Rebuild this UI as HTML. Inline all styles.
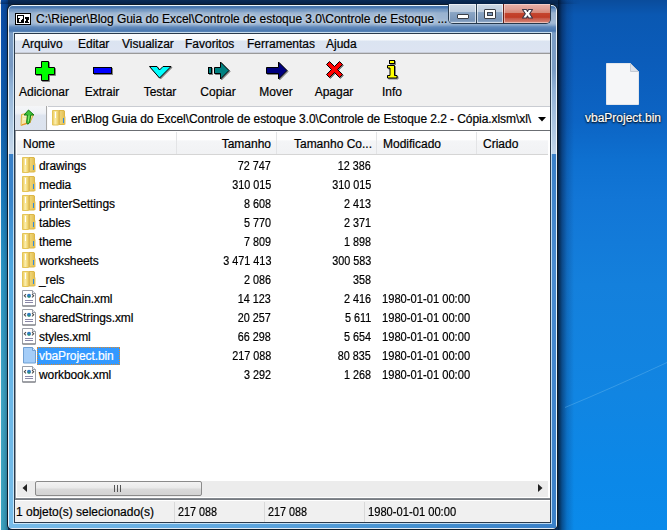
<!DOCTYPE html>
<html><head><meta charset="utf-8">
<style>
*{margin:0;padding:0;box-sizing:border-box}
html,body{width:667px;height:530px;overflow:hidden}
body{position:relative;font-family:"Liberation Sans",sans-serif;font-size:12px;color:#000;background:#0a2c58;-webkit-text-stroke:0.2px currentColor}
.a{position:absolute;white-space:nowrap}
#dl{left:0;top:0;width:8px;height:530px;background:linear-gradient(180deg,#0a4ea8 0px,#0c54b0 40px,#1062b2 115px,#1a7ac0 185px,#2a98c8 265px,#40a8c8 395px,#3ca6c2 530px)}
#dr{left:558px;top:0;width:110px;height:530px;background:linear-gradient(180deg,#0a4c9c 0px,#0a58b2 15px,#0b5cba 60px,#0c64c4 120px,#0e70d0 160px,#1276d6 200px,#1480dc 285px,#1185e2 395px,#0b88e8 480px,#0a8aea 530px)}
#shadow{left:558px;top:0;width:16px;height:530px;background:linear-gradient(90deg,rgba(2,15,35,.85) 0px,rgba(5,30,70,.55) 4px,rgba(8,45,100,.25) 9px,rgba(8,50,110,0) 16px)}
#win{left:7px;top:4px;width:551px;height:526px;border:1px solid #0e1b28;border-radius:6px 6px 5px 5px;overflow:hidden}
#fr{left:0;top:0;width:549px;height:524px;border:1px solid rgba(255,255,255,.85);border-radius:5px 5px 4px 4px;background:linear-gradient(180deg,#4474ae 0px,#4a78b0 2px,#6f94c0 3px,#7a9cc4 5px,#98b2d0 7px,#a2b9d4 17px,#8aa8cc 19px,#5f88ba 21px,#4a78b0 25px,#7a9cc4 27px,#7899c2 60px,#90b2d6 80px,#b4cce4 125px,#c8d8ea 147px,#c8d8ea 148px,#3a80c8 148px,#3a86cc 195px,#50a8e0 260px,#6cb8e8 390px,#78bce8 524px)}
#frr{left:543px;top:28px;width:5px;height:495px;background:linear-gradient(180deg,#7a9cc4 0px,#7a9cc4 37px,#92b2d6 57px,#c0d4e8 120px,#c0d4e8 121px,#3a80c8 121px,#4a8cd0 232px,#3f84cc 400px,#3a80c8 496px)}
#frb{left:1px;top:517px;width:547px;height:6px;background:linear-gradient(90deg,#78bce8 0%,#60a8e0 40%,#4490d0 75%,#3a80c8 100%)}
#client{left:14px;top:33px;width:537px;height:490px;border:1px solid #2a3a4c;background:#f0f0f0;box-shadow:0 0 0 1px rgba(230,245,255,.75)}
#menu{left:15px;top:34px;width:535px;height:20px;background:linear-gradient(180deg,#fbfcfe 0px,#f6f9fc 6px,#dbe4f1 7px,#dde4f2 18px,#c8cdd8 18px,#c8cdd8 19px);border-bottom:1px solid #9a9a9a}
#menu span{position:absolute;top:3px}
#tb{left:15px;top:54px;width:535px;height:52px;background:#f0f0f0}
.lbl{position:absolute;top:31px;width:58px;text-align:center}
#up{left:15px;top:106px;width:31px;height:24px;background:linear-gradient(180deg,#f5f6f8 0%,#eef1f6 30%,#dde4ef 40%,#dce3ee 100%)}
#upsep{left:46px;top:106px;width:2px;height:24px;background:linear-gradient(90deg,#a9a9a9 50%,#fafafa 50%)}
#combo{left:48px;top:106px;width:502px;height:24px;background:#fff;border-top:1px solid #c9ccd2}
#addrline{left:15px;top:130px;width:535px;height:1px;background:#6b6e73}
#list{left:15px;top:131px;width:535px;height:367px;background:#fff;border-left:1px solid #9aa0a6}
#hdr{left:17px;top:131px;width:531px;height:24px;background:linear-gradient(180deg,#fff 0%,#fff 40%,#f4f5f7 42%,#f1f2f4 100%);border-bottom:1px solid #d5d5d5}
.sep{position:absolute;top:1px;width:1px;height:22px;background:#e3e4e6}
.row{position:absolute;left:0;height:19px;width:533px}
.row .n{position:absolute;left:22px;top:3px;letter-spacing:-0.1px}
.row .s1{position:absolute;right:279px;top:3px;transform:scaleX(.9);transform-origin:100% 50%}
.row .s2{position:absolute;right:179px;top:3px;transform:scaleX(.9);transform-origin:100% 50%}
.row .d{position:absolute;left:365px;top:3px;transform:scaleX(.93);transform-origin:0 50%}
.ic{position:absolute;left:5px;top:1px}
.sel{background:#3399ff;color:#fff;outline:1px dotted #d88a30;outline-offset:-1px;padding:2px 6px 2px 2px;margin:-2px 0 0 -2px}
#sb{left:17px;top:481px;width:531px;height:16px;background:#ececec}
#thumb{left:35px;top:481px;width:167px;height:15px;border:1px solid #8b8b8b;border-radius:2px;background:linear-gradient(180deg,#f3f3f3 0%,#eaeaea 45%,#dadada 55%,#d3d3d3 100%)}
#sline{left:15px;top:498px;width:535px;height:2px;background:linear-gradient(180deg,#8a8f95,#6f747a)}
#status{left:15px;top:500px;width:535px;height:22px;border-top:1px solid #fff;background:#f0f0f0}
.ssep{position:absolute;top:1px;width:1px;height:20px;background:#d9d9d9}
</style></head><body>
<div class="a" id="dl"></div>
<div class="a" style="left:0;top:0;width:1px;height:530px;background:#f4f6f8"></div>
<div class="a" id="dr"></div>
<div class="a" id="shadow"></div>
<div class="a" style="left:0;top:0;width:580px;height:4px;background:linear-gradient(180deg,rgba(0,20,50,0) 0%,rgba(0,20,50,.45) 100%);-webkit-mask-image:linear-gradient(90deg,#000 95%,transparent 100%)"></div>
<div class="a" style="left:1px;top:0;width:7px;height:530px;background:linear-gradient(90deg,rgba(0,20,50,0) 0%,rgba(0,20,50,.15) 60%,rgba(0,20,50,.4) 100%)"></div>
<svg class="a" style="left:557px;top:350px" width="110" height="70"><path d="M8 57.5Q55 38 110 12.5" stroke="#7cc4f0" stroke-width="1" fill="none" opacity=".35"/></svg>
<div class="a" id="win"><div class="a" id="fr"></div><div class="a" id="frr"></div><div class="a" id="frb"></div></div>
<!-- title -->
<svg class="a" style="left:15px;top:13px" width="16" height="12" viewBox="0 0 16 12" shape-rendering="crispEdges">
<rect x="0" y="0" width="16" height="12" fill="#000"/>
<rect x="1" y="1" width="14" height="10" fill="#fff"/>
<rect x="2" y="2" width="7" height="8" fill="#000"/>
<path d="M3 3H8V5L6 7V9H4V6.5L5.5 5H3Z" fill="#fff"/>
<path d="M10 4H14V5.5L12.5 8.5H14V10H10V8.5L11.5 5.5H10Z" fill="#000"/>
</svg>
<div class="a" style="left:36px;top:12px;color:#000;font-size:12px;letter-spacing:-0.03px;text-shadow:0 0 6px rgba(235,242,250,.9),0 0 3px rgba(235,242,250,.8)">C:\Rieper\Blog Guia do Excel\Controle de estoque 3.0\Controle de Estoque ...</div>
<!-- caption buttons -->
<div class="a" style="left:448px;top:4px;width:103px;height:20px;border:1px solid #26384c;border-top:none;border-radius:0 0 5px 5px;overflow:hidden">
 <div class="a" style="left:0;top:0;width:27px;height:19px;box-shadow:inset 0 0 0 1px rgba(255,255,255,.6);background:linear-gradient(180deg,#cdd9e7 0%,#bccbdd 40%,#8aa5c4 45%,#7995b8 85%,#9ab3cf 100%)"></div>
 <div class="a" style="left:27px;top:0;width:1px;height:19px;background:#2c4052"></div>
 <div class="a" style="left:28px;top:0;width:26px;height:19px;box-shadow:inset 0 0 0 1px rgba(255,255,255,.6);background:linear-gradient(180deg,#cdd9e7 0%,#bccbdd 40%,#8aa5c4 45%,#7995b8 85%,#9ab3cf 100%)"></div>
 <div class="a" style="left:54px;top:0;width:1px;height:19px;background:#6a2018"></div>
 <div class="a" style="left:55px;top:0;width:47px;height:19px;box-shadow:inset 0 0 0 1px rgba(255,230,225,.55);background:linear-gradient(180deg,#e8b0a8 0%,#e0a096 25%,#d68878 46%,#c4442e 50%,#c03c26 70%,#c65848 76%,#d07464 90%,#da8e7e 100%)"></div>
</div>
<div class="a" style="left:457px;top:14px;width:12px;height:5px;background:#fff;border:1px solid #3a3f48;border-radius:1px"></div>
<div class="a" style="left:484px;top:9px;width:12px;height:10px;background:#fff;border:1px solid #3a3f48;border-radius:1px"><div style="margin:2px 0 0 2px;width:6px;height:4px;background:#7d98bb;border:1px solid #3a3f48"></div></div>
<svg class="a" style="left:520px;top:7px" width="16" height="14" viewBox="0 0 16 14"><path d="M2.5 2.5h4l1 2 1-2h4l-2.8 4.3 2.8 4.2h-4l-1-2-1 2h-4l2.8-4.2z" fill="#fff" stroke="#3a3444" stroke-width="1.1" stroke-linejoin="round"/></svg>

<div class="a" id="client"></div>
<div class="a" id="menu">
 <span style="left:7px">Arquivo</span>
 <span style="left:63px">Editar</span>
 <span style="left:107px">Visualizar</span>
 <span style="left:170px">Favoritos</span>
 <span style="left:232px">Ferramentas</span>
 <span style="left:311px">Ajuda</span>
</div>
<div class="a" id="tb">
 <div class="lbl" style="left:0px">Adicionar</div>
 <div class="lbl" style="left:58px">Extrair</div>
 <div class="lbl" style="left:116px">Testar</div>
 <div class="lbl" style="left:174px">Copiar</div>
 <div class="lbl" style="left:232px">Mover</div>
 <div class="lbl" style="left:290px">Apagar</div>
 <div class="lbl" style="left:348px">Info</div>
</div>
<svg class="a" style="left:0;top:0;filter:drop-shadow(1px 1px 0 rgba(40,40,40,.55))" width="667" height="110">
 <!-- plus -->
 <path d="M41.5 61.5h7v6h6v7h-6v6h-7v-6h-6v-7h6z" fill="#00ff00" stroke="#000"/>
 <!-- minus -->
 <rect x="93.5" y="67.5" width="18" height="6" fill="#0000ff" stroke="#000"/>
 <!-- chevron -->
 <path d="M149.5 66.5h7.5l2.5 3.5 3.5-3.5h8l-11.5 11.5z" fill="#00ffff" stroke="#000"/>
 <!-- copiar -->
 <rect x="208.5" y="67.5" width="3" height="6" fill="#008080" stroke="#000"/>
 <path d="M214.5 67.5h6v-5.5l8.5 8.5-8.5 8.5v-5.5h-6z" fill="#008080" stroke="#000"/>
 <!-- mover -->
 <path d="M266.5 67.5h12v-5.5l8.5 8.5-8.5 8.5v-5.5h-12z" fill="#000080" stroke="#000"/>
 <!-- apagar -->
 <path d="M326.5 64.5l3-3 5 5 5-5 3 3-5 5 5 5-3 3-5-5-5 5-3-3 5-5z" fill="#ff0000" stroke="#000"/>
 <!-- info -->
 <rect x="389.5" y="60.5" width="5" height="3" fill="#ffff00" stroke="#000"/>
 <path d="M387.5 65.5h7v10h2.5v2.5h-9.5v-2.5h2.5v-7.5h-2.5z" fill="#ffff00" stroke="#000"/>
</svg>

<div class="a" id="up"></div>
<div class="a" id="upsep"></div>
<div class="a" id="combo"></div>
<div class="a" id="addrline"></div>
<svg class="a" style="left:20px;top:109px" width="16" height="18" viewBox="0 0 16 18">
 <path d="M1.5 5.5l5-1 1 1.5 6-0.5-3.5 8-9 3z" fill="#f6e7a8" stroke="#dfb33e"/>
 <path d="M2 15.8l8.5-2.6" stroke="#ef8f2a" stroke-width="1.2"/>
 <path d="M3 7h4M3 10h3" stroke="#fffbe0" stroke-width="1"/>
 <path d="M8.5 1l5.5 5h-3.2l-1.2 7.5-1.8 1.8-1.2-1.5 0.8-7.8h-3.3z" fill="#3fc23a" stroke="#127a12" stroke-width="1" stroke-linejoin="round"/>
 <path d="M9 6.5l-0.6 6" stroke="#8cf070" stroke-width="1"/>
</svg>
<svg class="a" style="left:52px;top:110px" width="16" height="16" viewBox="0 0 16 16"><defs><linearGradient id="afl" x1="0" x2="1"><stop offset="0" stop-color="#eac650"/><stop offset=".45" stop-color="#fbefb0"/><stop offset="1" stop-color="#ecca5c"/></linearGradient><linearGradient id="afr" x1="0" x2="1"><stop offset="0" stop-color="#c99a3a"/><stop offset=".35" stop-color="#efd576"/><stop offset="1" stop-color="#e2bd50"/></linearGradient></defs><path d="M6.5 0.5h5.5l0.5 0.5v13.5h-6z" fill="url(#afr)" stroke="#dcb748" stroke-width="1"/><path d="M12.5 6.5h1v8h-1z" fill="#e8c860"/><rect x="11" y="8" width="1" height="5" fill="#2f8ae0"/><path d="M0.5 0.5h5.5l0.5 0.5v14h-6z" fill="url(#afl)" stroke="#e4c458" stroke-width="1"/><rect x="3" y="2" width="1" height="6" fill="#fff"/></svg>
<div class="a" style="left:71px;top:112px;letter-spacing:-0.065px">er\Blog Guia do Excel\Controle de estoque 3.0\Controle de Estoque 2.2 - Cópia.xlsm\xl\</div>
<svg class="a" style="left:538px;top:117px" width="8" height="5"><path d="M0 0h8l-4 4.5z" fill="#000"/></svg>

<div class="a" id="list"></div>
<div class="a" id="hdr">
 <div class="sep" style="left:159px"></div>
 <div class="sep" style="left:259px"></div>
 <div class="sep" style="left:359px"></div>
 <div class="sep" style="left:459px"></div>
 <span class="a" style="left:6px;top:6px">Nome</span>
 <span class="a" style="right:277px;top:6px">Tamanho</span>
 <span class="a" style="right:176px;top:6px">Tamanho Co...</span>
 <span class="a" style="left:366px;top:6px">Modificado</span>
 <span class="a" style="left:466px;top:6px">Criado</span>
</div>
<div class="a" id="rows" style="left:17px;top:156px;width:533px;height:320px">
<div class="row" style="top:0px"><svg class="ic" width="16" height="16" viewBox="0 0 16 16"><defs><linearGradient id="gfl" x1="0" x2="1"><stop offset="0" stop-color="#eac650"/><stop offset=".45" stop-color="#fbefb0"/><stop offset="1" stop-color="#ecca5c"/></linearGradient><linearGradient id="gfr" x1="0" x2="1"><stop offset="0" stop-color="#c99a3a"/><stop offset=".35" stop-color="#efd576"/><stop offset="1" stop-color="#e2bd50"/></linearGradient></defs><path d="M6.5 0.5h5.5l0.5 0.5v14h-6z" fill="url(#gfr)" stroke="#dcb748" stroke-width="1"/><path d="M12.5 6.5h1v8.5h-1z" fill="#e8c860"/><rect x="11" y="8" width="1" height="5" fill="#2f8ae0"/><path d="M0.5 0.5h5.5l0.5 0.5v14.5h-6z" fill="url(#gfl)" stroke="#e4c458" stroke-width="1"/><rect x="3" y="2" width="1" height="6" fill="#fff"/></svg><span class="n">drawings</span><span class="s1">72 747</span><span class="s2">12 386</span><span class="d"></span></div>
<div class="row" style="top:19px"><svg class="ic" width="16" height="16" viewBox="0 0 16 16"><defs><linearGradient id="gfl" x1="0" x2="1"><stop offset="0" stop-color="#eac650"/><stop offset=".45" stop-color="#fbefb0"/><stop offset="1" stop-color="#ecca5c"/></linearGradient><linearGradient id="gfr" x1="0" x2="1"><stop offset="0" stop-color="#c99a3a"/><stop offset=".35" stop-color="#efd576"/><stop offset="1" stop-color="#e2bd50"/></linearGradient></defs><path d="M6.5 0.5h5.5l0.5 0.5v14h-6z" fill="url(#gfr)" stroke="#dcb748" stroke-width="1"/><path d="M12.5 6.5h1v8.5h-1z" fill="#e8c860"/><rect x="11" y="8" width="1" height="5" fill="#2f8ae0"/><path d="M0.5 0.5h5.5l0.5 0.5v14.5h-6z" fill="url(#gfl)" stroke="#e4c458" stroke-width="1"/><rect x="3" y="2" width="1" height="6" fill="#fff"/></svg><span class="n">media</span><span class="s1">310 015</span><span class="s2">310 015</span><span class="d"></span></div>
<div class="row" style="top:38px"><svg class="ic" width="16" height="16" viewBox="0 0 16 16"><defs><linearGradient id="gfl" x1="0" x2="1"><stop offset="0" stop-color="#eac650"/><stop offset=".45" stop-color="#fbefb0"/><stop offset="1" stop-color="#ecca5c"/></linearGradient><linearGradient id="gfr" x1="0" x2="1"><stop offset="0" stop-color="#c99a3a"/><stop offset=".35" stop-color="#efd576"/><stop offset="1" stop-color="#e2bd50"/></linearGradient></defs><path d="M6.5 0.5h5.5l0.5 0.5v14h-6z" fill="url(#gfr)" stroke="#dcb748" stroke-width="1"/><path d="M12.5 6.5h1v8.5h-1z" fill="#e8c860"/><rect x="11" y="8" width="1" height="5" fill="#2f8ae0"/><path d="M0.5 0.5h5.5l0.5 0.5v14.5h-6z" fill="url(#gfl)" stroke="#e4c458" stroke-width="1"/><rect x="3" y="2" width="1" height="6" fill="#fff"/></svg><span class="n">printerSettings</span><span class="s1">8 608</span><span class="s2">2 413</span><span class="d"></span></div>
<div class="row" style="top:57px"><svg class="ic" width="16" height="16" viewBox="0 0 16 16"><defs><linearGradient id="gfl" x1="0" x2="1"><stop offset="0" stop-color="#eac650"/><stop offset=".45" stop-color="#fbefb0"/><stop offset="1" stop-color="#ecca5c"/></linearGradient><linearGradient id="gfr" x1="0" x2="1"><stop offset="0" stop-color="#c99a3a"/><stop offset=".35" stop-color="#efd576"/><stop offset="1" stop-color="#e2bd50"/></linearGradient></defs><path d="M6.5 0.5h5.5l0.5 0.5v14h-6z" fill="url(#gfr)" stroke="#dcb748" stroke-width="1"/><path d="M12.5 6.5h1v8.5h-1z" fill="#e8c860"/><rect x="11" y="8" width="1" height="5" fill="#2f8ae0"/><path d="M0.5 0.5h5.5l0.5 0.5v14.5h-6z" fill="url(#gfl)" stroke="#e4c458" stroke-width="1"/><rect x="3" y="2" width="1" height="6" fill="#fff"/></svg><span class="n">tables</span><span class="s1">5 770</span><span class="s2">2 371</span><span class="d"></span></div>
<div class="row" style="top:76px"><svg class="ic" width="16" height="16" viewBox="0 0 16 16"><defs><linearGradient id="gfl" x1="0" x2="1"><stop offset="0" stop-color="#eac650"/><stop offset=".45" stop-color="#fbefb0"/><stop offset="1" stop-color="#ecca5c"/></linearGradient><linearGradient id="gfr" x1="0" x2="1"><stop offset="0" stop-color="#c99a3a"/><stop offset=".35" stop-color="#efd576"/><stop offset="1" stop-color="#e2bd50"/></linearGradient></defs><path d="M6.5 0.5h5.5l0.5 0.5v14h-6z" fill="url(#gfr)" stroke="#dcb748" stroke-width="1"/><path d="M12.5 6.5h1v8.5h-1z" fill="#e8c860"/><rect x="11" y="8" width="1" height="5" fill="#2f8ae0"/><path d="M0.5 0.5h5.5l0.5 0.5v14.5h-6z" fill="url(#gfl)" stroke="#e4c458" stroke-width="1"/><rect x="3" y="2" width="1" height="6" fill="#fff"/></svg><span class="n">theme</span><span class="s1">7 809</span><span class="s2">1 898</span><span class="d"></span></div>
<div class="row" style="top:95px"><svg class="ic" width="16" height="16" viewBox="0 0 16 16"><defs><linearGradient id="gfl" x1="0" x2="1"><stop offset="0" stop-color="#eac650"/><stop offset=".45" stop-color="#fbefb0"/><stop offset="1" stop-color="#ecca5c"/></linearGradient><linearGradient id="gfr" x1="0" x2="1"><stop offset="0" stop-color="#c99a3a"/><stop offset=".35" stop-color="#efd576"/><stop offset="1" stop-color="#e2bd50"/></linearGradient></defs><path d="M6.5 0.5h5.5l0.5 0.5v14h-6z" fill="url(#gfr)" stroke="#dcb748" stroke-width="1"/><path d="M12.5 6.5h1v8.5h-1z" fill="#e8c860"/><rect x="11" y="8" width="1" height="5" fill="#2f8ae0"/><path d="M0.5 0.5h5.5l0.5 0.5v14.5h-6z" fill="url(#gfl)" stroke="#e4c458" stroke-width="1"/><rect x="3" y="2" width="1" height="6" fill="#fff"/></svg><span class="n">worksheets</span><span class="s1">3 471 413</span><span class="s2">300 583</span><span class="d"></span></div>
<div class="row" style="top:114px"><svg class="ic" width="16" height="16" viewBox="0 0 16 16"><defs><linearGradient id="gfl" x1="0" x2="1"><stop offset="0" stop-color="#eac650"/><stop offset=".45" stop-color="#fbefb0"/><stop offset="1" stop-color="#ecca5c"/></linearGradient><linearGradient id="gfr" x1="0" x2="1"><stop offset="0" stop-color="#c99a3a"/><stop offset=".35" stop-color="#efd576"/><stop offset="1" stop-color="#e2bd50"/></linearGradient></defs><path d="M6.5 0.5h5.5l0.5 0.5v14h-6z" fill="url(#gfr)" stroke="#dcb748" stroke-width="1"/><path d="M12.5 6.5h1v8.5h-1z" fill="#e8c860"/><rect x="11" y="8" width="1" height="5" fill="#2f8ae0"/><path d="M0.5 0.5h5.5l0.5 0.5v14.5h-6z" fill="url(#gfl)" stroke="#e4c458" stroke-width="1"/><rect x="3" y="2" width="1" height="6" fill="#fff"/></svg><span class="n">_rels</span><span class="s1">2 086</span><span class="s2">358</span><span class="d"></span></div>
<div class="row" style="top:133px"><svg class="ic" width="16" height="17" viewBox="0 0 16 17"><path d="M0.5 0.5h10l3 3v12.5h-13z" fill="#fff" stroke="#9a9ea6"/><path d="M10.5 0.5v3h3" fill="#e8eaee" stroke="#9a9ea6"/><path d="M0.5 16h13" stroke="#6e7076"/><circle cx="7" cy="5.8" r="2" fill="#2f7ac0"/><path d="M5.3 6.6a2 2 0 0 0 3.4 0z" fill="#2aa040"/><path d="M4 4.2L2.3 5.8 4 7.4M10 4.2L11.7 5.8 10 7.4" stroke="#4a4a4a" stroke-width="1.1" fill="none"/><path d="M3 10.5h8M3 12.5h8" stroke="#8a88a8"/></svg><span class="n">calcChain.xml</span><span class="s1">14 123</span><span class="s2">2 416</span><span class="d">1980-01-01 00:00</span></div>
<div class="row" style="top:152px"><svg class="ic" width="16" height="17" viewBox="0 0 16 17"><path d="M0.5 0.5h10l3 3v12.5h-13z" fill="#fff" stroke="#9a9ea6"/><path d="M10.5 0.5v3h3" fill="#e8eaee" stroke="#9a9ea6"/><path d="M0.5 16h13" stroke="#6e7076"/><circle cx="7" cy="5.8" r="2" fill="#2f7ac0"/><path d="M5.3 6.6a2 2 0 0 0 3.4 0z" fill="#2aa040"/><path d="M4 4.2L2.3 5.8 4 7.4M10 4.2L11.7 5.8 10 7.4" stroke="#4a4a4a" stroke-width="1.1" fill="none"/><path d="M3 10.5h8M3 12.5h8" stroke="#8a88a8"/></svg><span class="n">sharedStrings.xml</span><span class="s1">20 257</span><span class="s2">5 611</span><span class="d">1980-01-01 00:00</span></div>
<div class="row" style="top:171px"><svg class="ic" width="16" height="17" viewBox="0 0 16 17"><path d="M0.5 0.5h10l3 3v12.5h-13z" fill="#fff" stroke="#9a9ea6"/><path d="M10.5 0.5v3h3" fill="#e8eaee" stroke="#9a9ea6"/><path d="M0.5 16h13" stroke="#6e7076"/><circle cx="7" cy="5.8" r="2" fill="#2f7ac0"/><path d="M5.3 6.6a2 2 0 0 0 3.4 0z" fill="#2aa040"/><path d="M4 4.2L2.3 5.8 4 7.4M10 4.2L11.7 5.8 10 7.4" stroke="#4a4a4a" stroke-width="1.1" fill="none"/><path d="M3 10.5h8M3 12.5h8" stroke="#8a88a8"/></svg><span class="n">styles.xml</span><span class="s1">66 298</span><span class="s2">5 654</span><span class="d">1980-01-01 00:00</span></div>
<div class="row" style="top:190px"><svg class="ic" width="16" height="17" viewBox="0 0 16 17"><path d="M1.5 0.5h9l3 3v12.5h-12z" fill="#a4cdf8" stroke="#6f9fd2"/><path d="M10.5 0.5v3h3" fill="#d0e6fc" stroke="#6f9fd2"/></svg><span class="n sel">vbaProject.bin</span><span class="s1">217 088</span><span class="s2">80 835</span><span class="d">1980-01-01 00:00</span></div>
<div class="row" style="top:209px"><svg class="ic" width="16" height="17" viewBox="0 0 16 17"><path d="M0.5 0.5h10l3 3v12.5h-13z" fill="#fff" stroke="#9a9ea6"/><path d="M10.5 0.5v3h3" fill="#e8eaee" stroke="#9a9ea6"/><path d="M0.5 16h13" stroke="#6e7076"/><circle cx="7" cy="5.8" r="2" fill="#2f7ac0"/><path d="M5.3 6.6a2 2 0 0 0 3.4 0z" fill="#2aa040"/><path d="M4 4.2L2.3 5.8 4 7.4M10 4.2L11.7 5.8 10 7.4" stroke="#4a4a4a" stroke-width="1.1" fill="none"/><path d="M3 10.5h8M3 12.5h8" stroke="#8a88a8"/></svg><span class="n">workbook.xml</span><span class="s1">3 292</span><span class="s2">1 268</span><span class="d">1980-01-01 00:00</span></div>
<!--endrows--></div>

<div class="a" id="sb"></div>
<div class="a" id="thumb"></div>
<svg class="a" style="left:22px;top:484px" width="6" height="8"><path d="M5 0v8l-4.5-4z" fill="#222"/></svg>
<svg class="a" style="left:538px;top:484px" width="6" height="8"><path d="M0 0v8l4.5-4z" fill="#222"/></svg>
<div class="a" style="left:114px;top:485px;width:8px;height:7px;background:repeating-linear-gradient(90deg,#555 0 1px,transparent 1px 3px)"></div>
<div class="a" id="sline"></div>
<div class="a" id="status">
 <span class="a" style="left:1px;top:4px">1 objeto(s) selecionado(s)</span>
 <div class="ssep" style="left:159px"></div>
 <span class="a" style="left:163px;top:4px;transform:scaleX(.9);transform-origin:0 50%">217 088</span>
 <div class="ssep" style="left:249px"></div>
 <span class="a" style="left:253px;top:4px;transform:scaleX(.9);transform-origin:0 50%">217 088</span>
 <div class="ssep" style="left:349px"></div>
 <span class="a" style="left:353px;top:4px;transform:scaleX(.93);transform-origin:0 50%">1980-01-01 00:00</span>
</div>

<!-- desktop icon -->
<svg class="a" style="left:606px;top:63px" width="34" height="43" viewBox="0 0 34 43">
 <path d="M1 1.5h23.5l8.5 8.5v32h-32z" fill="rgba(0,30,80,.25)"/>
 <path d="M0.5 0.5h24l8 8v33h-32z" fill="#f5f6f8" stroke="#e2e6ec"/>
 <path d="M24.5 0.5v8h8z" fill="#dde2ea" stroke="#c3cad4" stroke-linejoin="round"/>
</svg>
<div class="a" style="left:585px;top:111px;color:#fff;text-shadow:0 1px 2px #000,0 0 2px #000">vbaProject.bin</div>
</body></html>
